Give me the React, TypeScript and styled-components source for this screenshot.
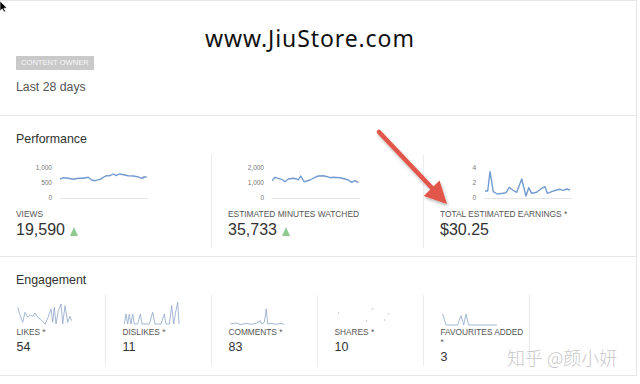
import styled, { createGlobalStyle } from "styled-components";

const GlobalStyle = createGlobalStyle`
  html, body {
    margin: 0;
    padding: 0;
    background: #ffffff;
  }
  body {
    font-family: "Liberation Sans", Arial, sans-serif;
    color: #333333;
  }
`;

type Pt = [number, number];

const VIEWS: Pt[] = [
  [0, 19], [3.3, 17.7], [8.3, 18.3], [13.3, 19.3], [18.3, 18.3], [23.3, 18.3],
  [28.3, 17.3], [31.7, 20], [35, 20.7], [40, 19.3], [43.3, 17.3], [46.7, 15.7],
  [50, 15.7], [53.3, 14], [56, 15.7], [59.3, 14], [63.3, 14.7], [68.3, 15.7],
  [73.3, 16], [77.3, 16.7], [80, 17.7], [82.7, 18.3], [84, 16.7], [86.7, 17.3],
];

const MINUTES: Pt[] = [
  [0, 20.7], [3, 17.3], [6.3, 18.3], [9.7, 19.3], [13, 21.7], [16.3, 19],
  [21.3, 18.3], [24.7, 19], [26.3, 20], [28.7, 16], [32, 21.7], [34.7, 21],
  [38, 20], [43, 17.3], [46.3, 16], [51.3, 15.7], [55.3, 16.7], [58, 17.7],
  [61.3, 17.3], [68, 17.7], [73, 19], [76.3, 20], [79.7, 22.3], [83, 20.7], [86.3, 22.7],
];

const EARNINGS: Pt[] = [
  [1, 31], [3.7, 31], [6, 11.7], [9.3, 31.7], [13.3, 34], [18.7, 33.3], [22, 32.7],
  [25.3, 27.3], [28.7, 30], [32.7, 32.3], [37.7, 19], [42, 36], [44.7, 27.7],
  [47.7, 33.3], [52.7, 32.3], [57.7, 28.3], [61, 26.7], [63.3, 33.3], [67.7, 31.7],
  [72.7, 30], [76, 29.3], [79.3, 30.3], [82.7, 29], [86, 30],
];

const LIKES: Pt[] = [
  [0.7, 6.3], [3.3, 14.7], [5.7, 21.3], [8, 11.3], [10.7, 16.3], [13.3, 14],
  [15.7, 15.3], [18, 12], [20.7, 16.3], [23.3, 18], [25.7, 20.7], [28.3, 23],
  [30.7, 17.3], [34, 8], [35.7, 21.3], [37.3, 6.3], [39, 23], [41.3, 9.7], [44, 3],
  [45.7, 23], [48, 4.7], [50.7, 21.3], [53, 15.3], [54.7, 19.7],
];

const DISLIKES: Pt[] = [
  [1.3, 23], [3, 13], [4.7, 23], [6.3, 13], [8, 23], [9.7, 13], [11.3, 23],
  [14.7, 23], [17.3, 13], [19, 23], [26.3, 23], [29.7, 11.3], [32, 23], [38, 23],
  [41.3, 13], [43, 23], [46.3, 23], [48.7, 4.7], [50.7, 23], [52.3, 13], [54.7, 1.3], [56, 23],
];

const COMMENTS: Pt[] = [
  [1.3, 23], [7, 22], [12, 23.7], [17, 22.3], [22, 23.3], [27, 22.3], [31.3, 19.7],
  [32.7, 23], [35.3, 21.3], [37.3, 8], [38.7, 23], [42, 22.3], [47, 23.3], [52, 22.3], [55.3, 23.3],
];

const SHARES_DOTS: Pt[] = [[3.5, 12], [37.5, 8], [53.5, 13], [31.5, 20], [49.5, 19]];

const FAVOURITES: Pt[] = [
  [1.7, 13], [5, 24], [16.7, 24], [20, 14.7], [22.7, 24], [25, 13], [27.7, 24], [30, 24], [56, 24],
];

const toPoints = (pts: Pt[]) => pts.map(([x, y]) => `${x},${y}`).join(" ");

const Page = styled.div`
  position: relative;
  width: 637px;
  border-top: 1px solid #e6e6e6;
  border-right: 1px solid #e6e6e6;
  box-sizing: border-box;
`;

const Section = styled.section<{ $h: number }>`
  height: ${(p) => p.$h}px;
  border-bottom: 1px solid #e6e6e6;
  box-sizing: border-box;
  display: flex;
  flex-direction: column;
`;

const Header = styled(Section)`
  padding: 55px 16px 0;
`;

const Badge = styled.span`
  align-self: flex-start;
  height: 14px;
  line-height: 14px;
  padding: 0 5px;
  background: #c9c9c9;
  color: #f7f7f7;
  font-size: 7.6px;
  text-transform: uppercase;
`;

const Period = styled.div`
  margin-top: 10px;
  font-size: 12.3px;
  line-height: 15px;
  color: #555555;
`;

const SectionTitle = styled.h2`
  margin: 0;
  padding: 15px 16px 0;
  font-size: 12.4px;
  line-height: 16px;
  font-weight: normal;
  color: #333333;
`;

const MetricRow = styled.div<{ $top: number }>`
  display: flex;
  margin-top: ${(p) => p.$top}px;
`;

const Metric = styled.div`
  flex: 0 0 212px;
  height: 93px;
  box-sizing: border-box;
  padding: 5px 0 0 16px;
  border-right: 1px solid #ececec;
  &:last-child {
    border-right: none;
  }
`;

const Chart = styled.div`
  display: flex;
  gap: 8px;
  height: 46px;
`;

const Axis = styled.div`
  width: 36px;
  display: flex;
  flex-direction: column;
  text-align: right;
  font-size: 6.5px;
  line-height: 15px;
  color: #777777;
`;

const MetricLabel = styled.div`
  margin-top: 3px;
  font-size: 8.4px;
  line-height: 11px;
  color: #555555;
  text-transform: uppercase;
`;

const MetricValue = styled.div`
  display: flex;
  align-items: center;
  gap: 5px;
  margin-top: 1px;
  font-size: 16px;
  line-height: 18px;
  color: #333333;
`;

const UpArrow = styled.span`
  width: 0;
  height: 0;
  border-left: 4px solid transparent;
  border-right: 4px solid transparent;
  border-bottom: 9px solid #8fc98f;
  margin-top: 2px;
`;

const Card = styled.div`
  flex: 0 0 106px;
  height: 71px;
  box-sizing: border-box;
  padding: 6px 4px 0 16.5px;
  border-right: 1px solid #ececec;
`;

const CardLabel = styled.div`
  font-size: 8.3px;
  line-height: 10px;
  color: #555555;
  text-transform: uppercase;
`;

const CardValue = styled.div`
  margin-top: 3px;
  font-size: 12.5px;
  line-height: 14px;
  color: #333333;
`;

const Overlay = styled.svg`
  position: absolute;
  left: 0;
  top: 0;
  pointer-events: none;
`;

const SiteMark = styled.div`
  position: absolute;
  left: 205px;
  top: 22px;
  font-family: "Noto Sans", "Open Sans", sans-serif;
  font-size: 23px;
  letter-spacing: 0.9px;
  line-height: 30px;
  color: #111111;
  pointer-events: none;
`;

const ZhihuMark = styled.div`
  position: absolute;
  left: 507px;
  top: 344px;
  font-family: "Noto Sans CJK SC", "Noto Sans", sans-serif;
  font-size: 18px;
  font-weight: 300;
  line-height: 24px;
  color: #c9c9c9;
  pointer-events: none;
`;

interface PerfProps {
  axis: string[];
  data: Pt[];
  label: string;
  value: string;
  up?: boolean;
}

const PerfMetric = ({ axis, data, label, value, up }: PerfProps) => (
  <Metric>
    <Chart>
      <Axis>
        {axis.map((a) => (
          <span key={a}>{a}</span>
        ))}
      </Axis>
      <svg width="88" height="46">
        <line x1="0" y1="38.5" x2="88" y2="38.5" stroke="#e3e3e3" strokeWidth="1" />
        <polyline points={toPoints(data)} fill="none" stroke="#739bd0" strokeWidth="1.4" strokeLinejoin="round" />
      </svg>
    </Chart>
    <MetricLabel>{label}</MetricLabel>
    <MetricValue>
      {value}
      {up && <UpArrow />}
    </MetricValue>
  </Metric>
);

interface EngProps {
  data?: Pt[];
  dots?: Pt[];
  label: string;
  value: string;
}

const EngCard = ({ data, dots, label, value }: EngProps) => (
  <Card>
    <svg width="58" height="26" style={{ display: "block" }}>
      {data && (
        <polyline points={toPoints(data)} fill="none" stroke="#8ea6ca" strokeWidth="0.8" strokeLinejoin="round" />
      )}
      {dots && dots.map(([x, y], i) => <circle key={i} cx={x} cy={y} r="0.8" fill="#c4c4c4" />)}
    </svg>
    <CardLabel>{label}</CardLabel>
    <CardValue>{value}</CardValue>
  </Card>
);

export default function App() {
  return (
    <>
      <GlobalStyle />
      <Page>
        <Header $h={115}>
          <Badge>Content owner</Badge>
          <Period>Last 28 days</Period>
        </Header>

        <Section $h={141}>
          <SectionTitle>Performance</SectionTitle>
          <MetricRow $top={8}>
            <PerfMetric axis={["1,000", "500", "0"]} data={VIEWS} label="Views" value="19,590" up />
            <PerfMetric axis={["2,000", "1,000", "0"]} data={MINUTES} label="Estimated minutes watched" value="35,733" up />
            <PerfMetric axis={["4", "2", "0"]} data={EARNINGS} label="Total estimated earnings *" value="$30.25" />
          </MetricRow>
        </Section>

        <Section $h={119}>
          <SectionTitle>Engagement</SectionTitle>
          <MetricRow $top={7}>
            <EngCard data={LIKES} label="Likes *" value="54" />
            <EngCard data={DISLIKES} label="Dislikes *" value="11" />
            <EngCard data={COMMENTS} label="Comments *" value="83" />
            <EngCard dots={SHARES_DOTS} label="Shares *" value="10" />
            <EngCard data={FAVOURITES} label="Favourites added *" value="3" />
          </MetricRow>
        </Section>

        <SiteMark>www.JiuStore.com</SiteMark>
        <ZhihuMark>知乎 @颜小妍</ZhihuMark>

        <Overlay width="640" height="384" viewBox="0 0 640 384">
          <defs>
            <filter id="arrowShadow" x="-20%" y="-20%" width="140%" height="140%">
              <feDropShadow dx="1" dy="2" stdDeviation="1.5" floodColor="#000" floodOpacity="0.3" />
            </filter>
          </defs>
          <g filter="url(#arrowShadow)">
            <line x1="379" y1="131" x2="433" y2="188" stroke="#e2574a" strokeWidth="4.5" strokeLinecap="round" />
            <polygon points="447,203 439.5,179.6 423.7,195" fill="#e2574a" />
          </g>
          <path d="M0 0 L0 10 L2.3 7.8 L4 11 L5.5 10.3 L3.9 7.2 L7 7 Z" fill="#000" stroke="#fff" strokeWidth="0.6" />
        </Overlay>
      </Page>
    </>
  );
}
